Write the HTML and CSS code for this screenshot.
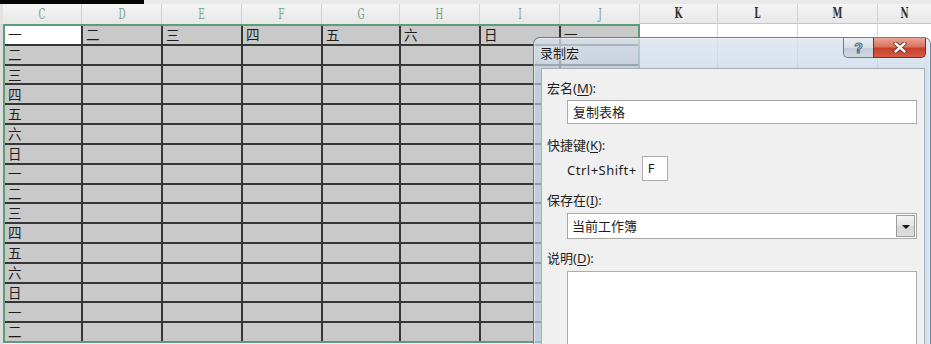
FILE: index.html
```html
<!DOCTYPE html>
<html lang="zh-CN">
<head>
<meta charset="utf-8">
<title>录制宏</title>
<link rel="stylesheet" href="styles.css">
</head>
<body>
<div class="screen">
  <div class="topstrip"><div class="blackbar"></div></div>
  <div class="heads">
    <div class="stub"></div>
    <div class="h sel w79"><span>C</span></div>
    <div class="h sel w80"><span>D</span></div>
    <div class="h sel w80"><span>E</span></div>
    <div class="h sel w80"><span>F</span></div>
    <div class="h sel w78"><span>G</span></div>
    <div class="h sel w80"><span>H</span></div>
    <div class="h sel w80"><span>I</span></div>
    <div class="h sel w80"><span>J</span></div>
    <div class="h w78"><span>K</span></div>
    <div class="h w80"><span>L</span></div>
    <div class="h w80"><span>M</span></div>
    <div class="h last"><span>N</span></div>
  </div>
  <div class="body">
    <div class="stub"></div>
    <div class="range">
      <div class="c active"><span>一</span></div><div class="c"><span>二</span></div><div class="c"><span>三</span></div><div class="c"><span>四</span></div><div class="c"><span>五</span></div><div class="c"><span>六</span></div><div class="c"><span>日</span></div><div class="c"><span>一</span></div>
      <div class="c"><span>二</span></div><div class="c"></div><div class="c"></div><div class="c"></div><div class="c"></div><div class="c"></div><div class="c"></div><div class="c"></div>
      <div class="c"><span>三</span></div><div class="c"></div><div class="c"></div><div class="c"></div><div class="c"></div><div class="c"></div><div class="c"></div><div class="c"></div>
      <div class="c"><span>四</span></div><div class="c"></div><div class="c"></div><div class="c"></div><div class="c"></div><div class="c"></div><div class="c"></div><div class="c"></div>
      <div class="c"><span>五</span></div><div class="c"></div><div class="c"></div><div class="c"></div><div class="c"></div><div class="c"></div><div class="c"></div><div class="c"></div>
      <div class="c"><span>六</span></div><div class="c"></div><div class="c"></div><div class="c"></div><div class="c"></div><div class="c"></div><div class="c"></div><div class="c"></div>
      <div class="c"><span>日</span></div><div class="c"></div><div class="c"></div><div class="c"></div><div class="c"></div><div class="c"></div><div class="c"></div><div class="c"></div>
      <div class="c"><span>一</span></div><div class="c"></div><div class="c"></div><div class="c"></div><div class="c"></div><div class="c"></div><div class="c"></div><div class="c"></div>
      <div class="c"><span>二</span></div><div class="c"></div><div class="c"></div><div class="c"></div><div class="c"></div><div class="c"></div><div class="c"></div><div class="c"></div>
      <div class="c"><span>三</span></div><div class="c"></div><div class="c"></div><div class="c"></div><div class="c"></div><div class="c"></div><div class="c"></div><div class="c"></div>
      <div class="c"><span>四</span></div><div class="c"></div><div class="c"></div><div class="c"></div><div class="c"></div><div class="c"></div><div class="c"></div><div class="c"></div>
      <div class="c"><span>五</span></div><div class="c"></div><div class="c"></div><div class="c"></div><div class="c"></div><div class="c"></div><div class="c"></div><div class="c"></div>
      <div class="c"><span>六</span></div><div class="c"></div><div class="c"></div><div class="c"></div><div class="c"></div><div class="c"></div><div class="c"></div><div class="c"></div>
      <div class="c"><span>日</span></div><div class="c"></div><div class="c"></div><div class="c"></div><div class="c"></div><div class="c"></div><div class="c"></div><div class="c"></div>
      <div class="c"><span>一</span></div><div class="c"></div><div class="c"></div><div class="c"></div><div class="c"></div><div class="c"></div><div class="c"></div><div class="c"></div>
      <div class="c"><span>二</span></div><div class="c"></div><div class="c"></div><div class="c"></div><div class="c"></div><div class="c"></div><div class="c"></div><div class="c"></div>
    </div>
    <div class="outside">
      <div class="oc w78"></div>
      <div class="oc w80"></div>
      <div class="oc w80"></div>
      <div class="oc last"></div>
    </div>
  </div>

  <div class="dialog">
    <div class="titlebar">
      <div class="title">录制宏</div>
      <div class="caption-buttons">
        <div class="btn-help"><span>?</span></div>
        <div class="btn-close">
          <svg width="14" height="11" viewBox="0 0 14 11">
            <path d="M2.5 1.5 L11.5 9.5 M11.5 1.5 L2.5 9.5" stroke="#6b2a20" stroke-width="4.2" stroke-linecap="round" fill="none"/>
            <path d="M2.5 1.5 L11.5 9.5 M11.5 1.5 L2.5 9.5" stroke="#ffffff" stroke-width="2.4" stroke-linecap="round" fill="none"/>
          </svg>
        </div>
      </div>
    </div>
    <div class="panel">
      <div class="label l1">宏名(<u>M</u>):</div>
      <div class="input">复制表格</div>
      <div class="label l2">快捷键(<u>K</u>):</div>
      <div class="shortcut">
        <span class="combo">Ctrl+Shift+</span>
        <div class="keybox">F</div>
      </div>
      <div class="label l3">保存在(<u>I</u>):</div>
      <div class="select">
        <span class="select-text">当前工作簿</span>
        <div class="drop"><span class="tri"></span></div>
      </div>
      <div class="label l4">说明(<u>D</u>):</div>
      <div class="textarea"></div>
    </div>
  </div>
</div>
</body>
</html>
```

FILE: styles.css
```css
* { box-sizing: border-box; }
html, body { margin: 0; padding: 0; }
body {
  width: 931px;
  height: 344px;
  overflow: hidden;
  background: #ffffff;
  font-family: "Noto Sans", "Noto Sans CJK SC", sans-serif;
}
.screen {
  position: relative;
  width: 931px;
  height: 344px;
  overflow: hidden;
}

/* top strip */
.topstrip {
  height: 4px;
  background: #e9e9e9;
  display: flex;
}
.blackbar {
  width: 144px;
  height: 4px;
  background: #050505;
}

/* column headers */
.heads {
  display: flex;
  height: 20px;
  background: linear-gradient(#f4f4f4, #e7e7e7);
}
.stub {
  width: 3px;
  flex: none;
  background: #e3e3e3;
}
.h {
  flex: none;
  height: 20px;
  border-right: 1px solid #d2d2d2;
  display: flex;
  justify-content: center;
  align-items: flex-end;
  padding-bottom: 2px;
  font-family: "DejaVu Serif", "Liberation Serif", serif;
  font-stretch: condensed;
  font-size: 11px;
  line-height: 10px;
  color: #2a2a2a;
}
.h span {
  display: inline-block;
  transform: scale(0.9, 1.35);
  transform-origin: bottom center;
}
.h.sel { color: #74a088; }
.h:not(.sel) { border-bottom: 1px solid #c4c4c4; font-weight: bold; color: #333; }
.w78 { width: 78px; }
.w79 { width: 79px; }
.w80 { width: 80px; }
.last { flex: 1; border-right: none; }

/* body grid */
.body {
  display: flex;
  height: 320px;
}
.body .stub { background: #dcdcdc; }
.range {
  flex: none;
  width: 637px;
  height: 319px;
  border: 2px solid #5b9d79;
  background: #363636;
  display: grid;
  grid-template-columns: 76px 78px 78px 78px 76px 78px 78px 77px;
  grid-template-rows: repeat(16, 1fr);
  gap: 2px;
}
.c {
  background: #c9c9c9;
  display: flex;
  align-items: center;
  padding-left: 3px;
  overflow: visible;
  font-family: "Noto Sans CJK SC", sans-serif;
  font-size: 13.5px;
  line-height: 1;
  color: #1c1c1c;
}
.c.active { background: #ffffff; }

.outside {
  flex: 1;
  display: flex;
}
.oc {
  flex: none;
  height: 100%;
  border-right: 1px solid #d9d9d9;
  background: #ffffff;
}
.oc.last { flex: 1; border-right: none; }

/* dialog */
.dialog {
  position: absolute;
  left: 533px;
  top: 37px;
  width: 398px;
  height: 330px;
  border: 1px solid rgba(55, 75, 100, 0.65);
  border-radius: 7px 7px 0 0;
  background:
    linear-gradient(rgba(255,255,255,0.3), rgba(255,255,255,0) 40px),
    rgba(190, 208, 228, 0.66);
  padding: 0 5px 0 7px;
  display: flex;
  flex-direction: column;
  box-shadow: inset 0 0 0 1px rgba(255,255,255,0.45);
}
.titlebar {
  height: 30px;
  flex: none;
  display: flex;
  align-items: flex-start;
}
.title {
  padding-top: 7px;
  margin-left: -1px;
  font-family: "Noto Sans CJK SC", sans-serif;
  font-size: 13px;
  line-height: 16px;
  color: #1a1a1a;
  text-shadow: 0 0 6px rgba(255,255,255,0.9);
}
.caption-buttons {
  margin-left: auto;
  margin-right: -1px;
  display: flex;
}
.btn-help {
  width: 30px;
  height: 20px;
  border: 1px solid #6d7c8e;
  border-top: none;
  border-right: none;
  border-radius: 0 0 0 5px;
  background: linear-gradient(#eaeef2, #d8dee5 50%, #c3ccd6 51%, #d0d8e1);
  display: flex;
  justify-content: center;
  align-items: center;
  font-family: "Liberation Sans", sans-serif;
  font-weight: bold;
  font-size: 14px;
  line-height: 1;
  color: #e9eef4;
  -webkit-text-stroke: 1px #56667a;
}
.btn-close {
  width: 53px;
  height: 20px;
  border: 1px solid #6e3228;
  border-top: none;
  border-radius: 0 0 5px 0;
  background: linear-gradient(#e9a596, #d9755f 45%, #c7402a 55%, #d45d45);
  display: flex;
  justify-content: center;
  align-items: center;
}
.panel {
  flex: 1;
  background: #f0f0f0;
  border: 1px solid #a3afbd;
  padding: 11px 7px 0 5px;
  font-size: 13px;
  color: #1e1e1e;
}
.label {
  height: 16px;
  line-height: 16px;
  font-size: 13px;
  white-space: nowrap;
}
.label u { text-underline-offset: 2px; }
.l2 { margin-top: 13px; }
.l3 { margin-top: 11px; }
.l4 { margin-top: 11px; }
.input {
  margin: 4px 0 0 20px;
  height: 24px;
  border: 1px solid #abadb3;
  border-top-color: #a0a4ab;
  background: #ffffff;
  padding-left: 5px;
  line-height: 22px;
  font-size: 13px;
  color: #1e1e1e;
}
.shortcut {
  margin: 3px 0 0 20px;
  height: 25px;
  display: flex;
  align-items: center;
}
.combo {
  font-size: 13px;
  letter-spacing: 0.5px;
  line-height: 16px;
  padding-top: 2px;
}
.keybox {
  margin-left: 5px;
  width: 26px;
  height: 25px;
  border: 1px solid #abadb3;
  background: #ffffff;
  padding-left: 5px;
  line-height: 23px;
  font-size: 13px;
}
.select {
  margin: 5px 0 0 20px;
  height: 26px;
  border: 1px solid #a7a7a7;
  background: #ffffff;
  display: flex;
  align-items: stretch;
  padding: 1px;
}
.select-text {
  flex: 1;
  padding-left: 3px;
  line-height: 22px;
  font-size: 13px;
}
.drop {
  width: 19px;
  border: 1px solid #9b9b9b;
  background: linear-gradient(#f4f4f4, #e2e2e2 50%, #d6d6d6 51%, #dedede);
  display: flex;
  justify-content: center;
  align-items: center;
}
.tri {
  width: 0;
  height: 0;
  border-left: 4px solid transparent;
  border-right: 4px solid transparent;
  border-top: 4px solid #111111;
  margin-top: 1px;
}
.textarea {
  margin: 5px 0 0 20px;
  height: 90px;
  border: 1px solid #abadb3;
  background: #ffffff;
}
```
